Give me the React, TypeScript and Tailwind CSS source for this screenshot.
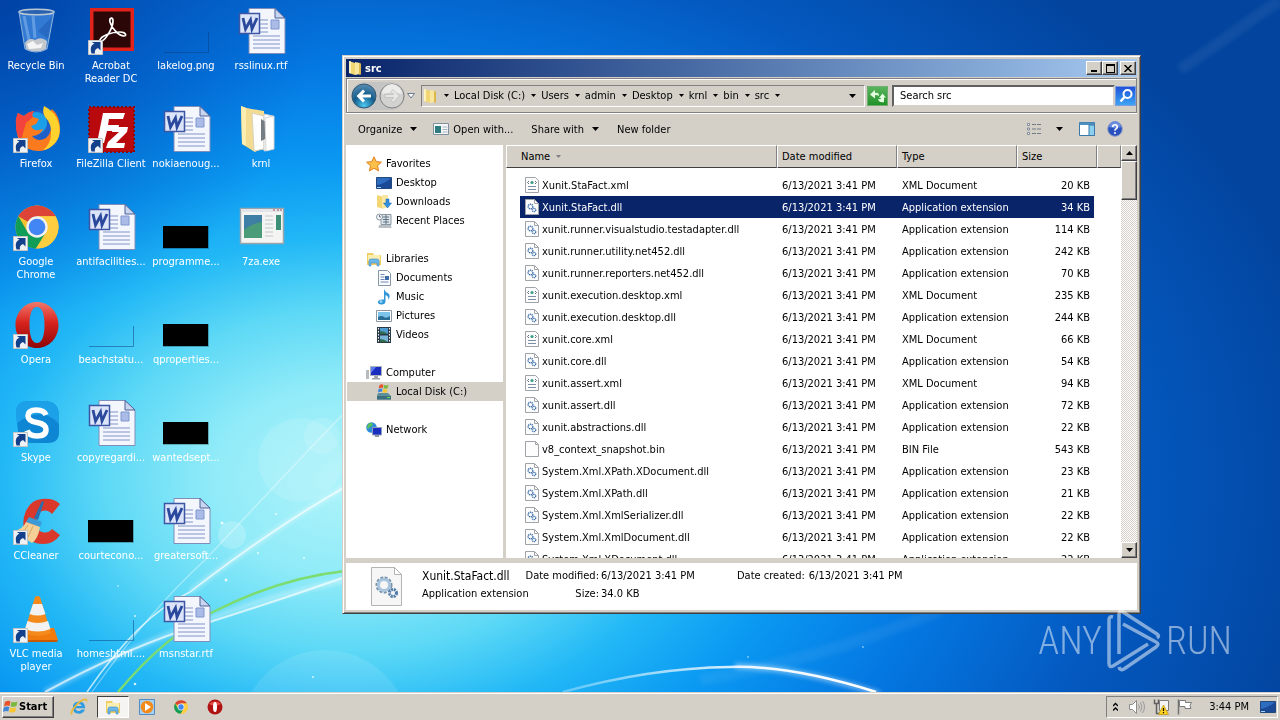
import { FC, JSX, ReactNode } from "react";

const raised =
  "border border-t-white border-l-white border-r-[#404040] border-b-[#404040] bg-[#d4d0c8] shadow-[inset_-1px_-1px_0_#808080]";
const sunken = "border border-t-[#808080] border-l-[#808080] border-r-white border-b-white";

const Wallpaper: FC = () => (
  <svg
    className="absolute inset-0 h-full w-full"
    viewBox="0 0 1280 720"
    preserveAspectRatio="xMidYMid slice"
    aria-hidden="true"
  >
    <defs>
      <radialGradient id="sky" gradientUnits="userSpaceOnUse" cx="0" cy="0" r="1" gradientTransform="translate(350 480) scale(992 690)">
        <stop offset="0" stopColor="#b0f4fb" />
        <stop offset="0.14" stopColor="#90ebf8" />
        <stop offset="0.25" stopColor="#5cd8f6" />
        <stop offset="0.35" stopColor="#22b8f6" />
        <stop offset="0.46" stopColor="#0a98f2" />
        <stop offset="0.6" stopColor="#0478e2" />
        <stop offset="0.78" stopColor="#0459c0" />
        <stop offset="1" stopColor="#02449e" />
      </radialGradient>
      <linearGradient id="arc" x1="0" x2="1" y1="0" y2="0">
        <stop offset="0" stopColor="#fff" stopOpacity="0.3" />
        <stop offset="0.6" stopColor="#fff" stopOpacity="0.9" />
        <stop offset="1" stopColor="#fff" />
      </linearGradient>
      <radialGradient id="corner" gradientUnits="userSpaceOnUse" cx="0" cy="0" r="320">
        <stop offset="0" stopColor="#003c9e" stopOpacity="0.8" />
        <stop offset="1" stopColor="#0050b8" stopOpacity="0" />
      </radialGradient>
      <filter id="soft" x="-20%" y="-20%" width="140%" height="140%">
        <feGaussianBlur stdDeviation="2" />
      </filter>
    </defs>
    <rect width="1280" height="720" fill="url(#sky)" />
    <rect width="320" height="320" fill="url(#corner)" />
    <circle cx="300" cy="460" r="42" fill="#fff" opacity="0.12" />
    <circle cx="322" cy="436" r="18" fill="#fff" opacity="0.12" />
    <circle cx="232" cy="535" r="14" fill="#fff" opacity="0.2" />
    <circle cx="325" cy="735" r="85" fill="#fff" opacity="0.1" />
    <g fill="none" stroke="#fff" filter="url(#soft)">
      <path d="M45 692Q200 610 345 580" strokeWidth="5" opacity="0.35" />
      <path d="M190 592Q270 530 345 487" strokeWidth="5" opacity="0.35" />
      <path d="M735 666Q800 668 880 694" strokeWidth="6" opacity="0.4" />
      <path d="M1280 0L1180 70M700 680Q820 660 940 610" strokeWidth="12" opacity="0.06" />
    </g>
    <g fill="none" stroke="#fff">
      <path d="M45 692Q130 646 200 625Q280 600 345 577" strokeWidth="2" opacity="0.65" />
      <path d="M87 692Q140 615 190 592Q270 530 345 487" strokeWidth="1.5" opacity="0.7" />
      <path d="M92 692Q150 610 205 560Q280 480 345 412" strokeWidth="1.2" opacity="0.4" />
    </g>
    <path d="M118 692Q165 636 213 612Q280 578 345 571" fill="none" stroke="#7cdc70" strokeWidth="2.5" />
    <path d="M563 692Q650 668 730 667Q790 665 876 692" fill="none" stroke="url(#arc)" strokeWidth="2.5" />
    <g fill="#fff" opacity="0.8">
      <circle cx="222" cy="523" r="1.5" />
      <circle cx="276" cy="514" r="1" />
      <circle cx="226" cy="580" r="1.5" />
      <circle cx="258" cy="553" r="1" />
      <circle cx="304" cy="558" r="1" />
      <circle cx="135" cy="616" r="1" />
      <circle cx="135" cy="684" r="1.3" />
      <circle cx="313" cy="677" r="1" />
      <circle cx="118" cy="586" r="0.8" />
      <circle cx="748" cy="657" r="0.8" />
      <circle cx="863" cy="647" r="0.8" />
    </g>
  </svg>
);

/* ---------- desktop icons, all drawn on a 48px board ---------- */

const Board: FC<{ children: ReactNode; link?: boolean }> = ({ children, link }) => (
  <svg className="h-12 w-12 shrink-0 overflow-visible" viewBox="0 0 48 48" aria-hidden="true">
    {children}
    {link && (
      <g>
        <path d="M1.5 33.5h14v14h-14z" fill="#eef1f6" stroke="#c4c4c4" />
        <path d="M4.500 46.500C3 41 4 38 7.500 36.800L4.800 35H13.500v8.500l-2.500-2.500C8 42 7.500 44 8 46.500z" fill="#12408a" />
      </g>
    )}
  </svg>
);

const RecycleBin: FC = () => (
  <Board>
    <path d="M7 4l6 38q11 6 22 0l7-38z" fill="#3f86dc" opacity="0.8" />
    <path d="M12 9l5 24 M21 9l2 22" stroke="#8fc0f2" strokeWidth="3" opacity="0.5" fill="none" />
    <path d="M40 10L26 24l10 8z" fill="#1e5cb0" opacity="0.5" />
    <path d="M13 36q4-6 10-3 6-4 12 1l-1 8q-10 5-20 0z" fill="#c4c8cc" />
    <path d="M15 37l6-3 4 4 6-2-2 5-12 1z" fill="#f4f4f4" />
    <ellipse cx="24.500" cy="5" rx="17.500" ry="2.800" fill="#2a62b0" stroke="#b8c8d4" strokeWidth="1.600" />
    <path d="M7 5l6 37q11 6 22 0l7-37" fill="none" stroke="#8fb4dc" />
  </Board>
);

const Acrobat: FC = () => (
  <Board link>
    <path d="M3 1h44v43H3z" fill="#e2231a" />
    <path d="M6.500 4.500h37v36h-37z" fill="#2b0707" />
    <path
      d="M13 33c1-4 11-8 20-8 6 0 7 4 4 4-5 0-12-7-14-14-1-4 3-6 3-1 0 7-7 18-11 20-2 1-3 0-2-1z"
      fill="none"
      stroke="#fff"
      strokeWidth="1.700"
    />
  </Board>
);

const Firefox: FC = () => (
  <Board link>
    <circle cx="26" cy="22" r="17" fill="#1f5fc8" />
    <circle cx="24" cy="18" r="11" fill="#1b9fe8" />
    <path d="M6 8q3 2 6 3 4-4 10-5-3 4-1 6l6 2-3 5-5 2q2 5 8 4l4-1q-3 7-11 7Q26 38 34 33q7-6 4-16-3-8 2-13 8 7 8 20 0 10-7 16-6 6-15 6-10 0-16-7-6-7-5-16Q3 14 6 8z" fill="#fb7a1e" />
    <path d="M6 8q3 2 6 3 4-4 10-5-3 4-1 6l-7 6-5 17q-6-7-5-15Q3 14 6 8z" fill="#f2443c" />
    <path d="M32 1q12 6 15 18 3 14-7 22-5 4-9 4 8-6 8-16 1-10-6-17-3-5-1-11z" fill="#ffd22e" />
  </Board>
);

const FileZilla: FC = () => (
  <Board link>
    <path d="M2 2h45v45H2z" fill="#b8090c" />
    <path d="M2 2h45v45H2z" fill="none" stroke="#8a0a0c" strokeWidth="2" strokeDasharray="2 2" />
    <path d="M16 8h22l-2 6H22l-1 6h11l-1 6H20l-3 12h-7z" fill="#fff" />
    <path d="M26 22h15l-1 5-11 11h9l-1 5H19l2-6 11-10h-7z" fill="#fff" />
  </Board>
);

const ChromeShape: FC = () => (
  <g>
    <circle cx="25" cy="24" r="21.500" fill="#f1c232" />
    <path d="M25 24L6.400 13.300A21.500 21.500 0 0 1 43.600 13.300H25z" fill="#db4437" />
    <path d="M6.400 13.300A21.500 21.500 0 0 0 24 45.500L34 29 15.500 29z" fill="#0f9d58" />
    <path d="M25 13.300h18.600A21.500 21.500 0 0 1 24 45.500L34.300 29.400z" fill="#ffcd40" />
    <circle cx="25" cy="24" r="10.700" fill="#f1f1f1" />
    <circle cx="25" cy="24" r="8.300" fill="#4285f4" />
  </g>
);

const OperaShape: FC = () => (
  <g>
    <linearGradient id="operaRed" x1="0" x2="0" y1="0" y2="1">
      <stop offset="0" stopColor="#f0786c" />
      <stop offset="0.45" stopColor="#d8231d" />
      <stop offset="1" stopColor="#8e0505" />
    </linearGradient>
    <path
      fillRule="evenodd"
      d="M25 1c12 0 21.500 10 21.500 23S37 47 25 47 3.500 37 3.500 24 13 1 25 1zm0 5c-5.500 0-7.500 8-7.500 18S19.500 42 25 42s7.500-8 7.500-18S30.500 6 25 6z"
      fill="url(#operaRed)"
    />
  </g>
);

const Skype: FC = () => (
  <Board link>
    <path d="M4 14Q4 2 16 2h16q15 0 15 15v16q0 11-11 11H18Q6 44 6 32z" fill="#0f86d4" />
    <path d="M4 14Q4 2 16 2h16q15 0 15 15v8Q30 6 5 24z" fill="#1fa8ec" opacity="0.8" />
    <path d="M34 16q-2-5-9.500-5-8.500 0-8.500 6 0 5 9 6.500 9 1.500 9 7 0 6.500-9 6.500-8 0-10-5.500" fill="none" stroke="#fff" strokeWidth="5.500" />
  </Board>
);

const CCleaner: FC = () => (
  <Board link>
    <path d="M48 7l-8 10q-4-5-10-3-6 3-6 11t6 10q6 2 10-3l8 6q-6 9-17 9-12 0-17-9-4-8-2-18Q16 3 30 2q12-1 18 5z" fill="#d9382a" />
    <path d="M30 4l2 1-6 18-4-2z" fill="#2a6fb0" />
    <path d="M17 20l13 5-2 5-14-5z" fill="#3c9bd6" />
    <path d="M14 25l14 5q-2 12-8 16L2 34q9-2 12-9z" fill="#f4cf96" />
    <path d="M16 28l-6 9M21 29l-5 11" stroke="#d8a860" />
  </Board>
);

const Vlc: FC = () => (
  <Board link>
    <path d="M9 33h33l4 12H7z" fill="#f07a0c" />
    <path d="M7 45h39l-1 2H8z" fill="#c85a04" />
    <path d="M23 2q2.500-2 5 0l11 36q-13 6-27 0z" fill="#f58a1c" />
    <path d="M21 9h9l3.500 10q-7.500 3-16 0zM15.500 26q10 4 20.500 0l2.500 8q-13 5-25.500 0z" fill="#f2f2f2" />
  </Board>
);

const WordDoc: FC = () => (
  <Board>
    <path d="M12 1.500h26l10 9.500v35.500H12z" fill="#f3f6fd" stroke="#7f8fba" />
    <path d="M38 1.500V11h10z" fill="#c9d6ef" stroke="#4a5f96" />
    <path d="M22 13h9M22 17h9M22 21h9M22 25h9M16 29h27M16 33h27M16 37h27M16 41h27" stroke="#8293c8" />
    <path d="M34 13h8v9h-8z" fill="#a9bbe6" stroke="#7f96cf" />
    <path d="M2.500 6.500h20v20h-20z" fill="#dbe4f8" stroke="#3c56a5" strokeWidth="1.500" />
    <path d="M6 11l2.500 11 5-9 1.500 9 5-11" fill="none" stroke="#2a489c" strokeWidth="2.800" />
  </Board>
);

const BlackThumb: FC = () => (
  <Board>
    <path d="M1 23h46v23H1z" fill="#000" opacity="0.25" />
    <path d="M1 23h45v22H1z" fill="#000" />
  </Board>
);

const ClearThumb: FC = () => (
  <Board>
    <path d="M2 45.500h44.500V25" fill="none" stroke="#0a3f80" strokeOpacity="0.5" />
  </Board>
);

const FolderOpen: FC = () => (
  <Board>
    <path d="M4 1l14 5v41L5 39z" fill="#ecc968" />
    <path d="M4 1l5 2v38l-4-2z" fill="#fbeeb0" />
    <path d="M9 3l18 3v36l-9 5-9-6z" fill="#f3dc92" />
    <path d="M15 8l12 3v33l-10 2z" fill="#fdfdfd" stroke="#d8d0b8" />
    <path d="M27 9l9 2v33l-9 2z" fill="#fff" stroke="#cfcfcf" />
    <path d="M24 14l5 3-1 10 2 6-6 3z" fill="#747c84" />
    <path d="M28 13l9-2v33l-8 2z" fill="#fff" stroke="#d4d4d4" />
  </Board>
);

const ExeWindow: FC = () => (
  <Board>
    <path d="M3.500 5.500h43v35h-43z" fill="#f4f4f2" stroke="#9aa4ac" strokeWidth="1.500" />
    <path d="M4 6h42v3H4z" fill="#e1e4e8" />
    <path d="M36 7h2M40 7h2M43 7h2" stroke="#a05050" />
    <path d="M7 12h18v23H7z" fill="#4a9c78" />
    <path d="M7 12h18v7q-10 1-18 8z" fill="#3f7ea4" />
    <path d="M28 13h8M28 17h8M28 21h8M28 25h8M28 29h8M28 33h8" stroke="#c2c6ca" />
    <path d="M39 12h5v15h-5z" fill="#3d8f78" />
  </Board>
);

const ChromeIcon: FC = () => <Board link><ChromeShape /></Board>;
const OperaIcon: FC = () => <Board link><OperaShape /></Board>;

type Shortcut = { label: string; icon: FC };

const desktop: (Shortcut | null)[] = [
  { label: "Recycle Bin", icon: RecycleBin },
  { label: "Acrobat\nReader DC", icon: Acrobat },
  { label: "lakelog.png", icon: ClearThumb },
  { label: "rsslinux.rtf", icon: WordDoc },
  { label: "Firefox", icon: Firefox },
  { label: "FileZilla Client", icon: FileZilla },
  { label: "nokiaenoug...", icon: WordDoc },
  { label: "krnl", icon: FolderOpen },
  { label: "Google\nChrome", icon: ChromeIcon },
  { label: "antifacilities...", icon: WordDoc },
  { label: "programme...", icon: BlackThumb },
  { label: "7za.exe", icon: ExeWindow },
  { label: "Opera", icon: OperaIcon },
  { label: "beachstatu...", icon: ClearThumb },
  { label: "qproperties...", icon: BlackThumb },
  null,
  { label: "Skype", icon: Skype },
  { label: "copyregardi...", icon: WordDoc },
  { label: "wantedsept...", icon: BlackThumb },
  null,
  { label: "CCleaner", icon: CCleaner },
  { label: "courtecono...", icon: BlackThumb },
  { label: "greatersoft...", icon: WordDoc },
  null,
  { label: "VLC media\nplayer", icon: Vlc },
  { label: "homeshtml....", icon: ClearThumb },
  { label: "msnstar.rtf", icon: WordDoc },
  null,
];

/* ---------- 16px icons ---------- */

const Small: FC<{ children: ReactNode; className?: string }> = ({ children, className = "h-4 w-4" }) => (
  <svg className={`shrink-0 ${className}`} viewBox="0 0 16 16" aria-hidden="true">
    {children}
  </svg>
);

const Caret: FC<{ big?: boolean; up?: boolean; gray?: boolean }> = ({ big, up, gray }) => (
  <svg className={big ? "h-1 w-[7px] shrink-0" : "h-[3px] w-[5px] shrink-0"} viewBox="0 0 7 4" aria-hidden="true">
    <path d={up ? "M0 4h7L3.500 0z" : "M0 0h7L3.500 4z"} fill={gray ? "#808080" : "#000"} />
  </svg>
);

const FolderSmall: FC = () => (
  <Small>
    <path d="M2 1l6 2v12l-6-2z" fill="#f3d674" />
    <path d="M2 1l2 .6v12l-2-.6z" fill="#fdf3bd" />
    <path d="M8 2l5 1v11l-5 1z" fill="#f8e69c" />
    <path d="M12 3l2 .4v11l-2 .4z" fill="#dcb84c" />
  </Small>
);

const LibraryIcon: FC = () => (
  <Small>
    <path d="M1 2h6l1 2h7v10H1z" fill="#efcf62" />
    <path d="M2 4h12v6H2z" fill="#faeeb0" />
    <path d="M3 15v-5q0-2 2-2h6q2 0 2 2v5h-2v-3H5v3z" fill="#6cb8ea" stroke="#3f8cc4" strokeWidth="0.600" />
  </Small>
);

const ScreenIcon: FC = () => (
  <Small>
    <path d="M.5 2.500h15v11H.500z" fill="#2e6cc0" stroke="#23497c" />
    <path d="M1 10q7-1 14-7v10H1z" fill="#1a4a96" />
    <path d="M1 12h4v1H1z" fill="#9fd0f5" />
  </Small>
);

const DllIcon: FC = () => (
  <Small>
    <path d="M1.500.5h9l4 4v11h-13z" fill="#fcfcfc" stroke="#a0a4a8" />
    <path d="M10.500.5v4h4" fill="none" stroke="#a0a4a8" />
    <circle cx="6.500" cy="7.500" r="2.300" fill="#fff" stroke="#3d6fa8" strokeWidth="1.500" strokeDasharray="1.200 .6" />
    <circle cx="10" cy="11" r="1.700" fill="#fff" stroke="#3d6fa8" strokeWidth="1.300" strokeDasharray="1 .5" />
  </Small>
);

const XmlIcon: FC = () => (
  <Small>
    <path d="M1.500.5h10l3 3v12h-13z" fill="#fcfcfc" stroke="#a0a4a8" />
    <path d="M5 4L3.500 5.500 5 7M11 4l1.500 1.500L11 7" fill="none" stroke="#60707e" />
    <circle cx="8" cy="5.500" r="1.600" fill="#3b9c88" />
    <path d="M4 9.500h8M4 12.500h8" stroke="#7c8ea0" />
  </Small>
);

const BinIcon: FC = () => (
  <Small>
    <path d="M1.500.5h10l3 3v12h-13z" fill="#fdfdfd" stroke="#a0a4a8" />
    <path d="M11.500.5v3h3" fill="none" stroke="#a0a4a8" />
  </Small>
);

const Flag: FC = () => (
  <g>
    <path d="M2 3q3-2 5.500-.5L6.500 7Q4 6 1 7.500z" fill="#e8532a" />
    <path d="M8.500 2.800Q12 4 14.500 2.500L13.500 7Q11 8.500 7.500 7.300z" fill="#7cb83c" />
    <path d="M.8 8.500q3-1.700 5.500-.5L5.300 12.500Q3 11.500 0 13z" fill="#3f86d8" />
    <path d="M7.300 8.500q3 1.300 5.900-.2l-1 4.500q-3 1.500-6 .2z" fill="#f8c631" />
  </g>
);

type Place = { label: string; icon: ReactNode; active?: boolean };

const places: { head: Place; items: Place[] }[] = [
  {
    head: {
      label: "Favorites",
      icon: (
        <Small>
          <path d="M8 .8l2.200 4.800 5.200.6-3.900 3.500 1.100 5.200L8 12.300l-4.600 2.600 1.100-5.200L.6 6.200l5.200-.6z" fill="#fdc04a" stroke="#e0801c" />
        </Small>
      ),
    },
    items: [
      { label: "Desktop", icon: <ScreenIcon /> },
      {
        label: "Downloads",
        icon: (
          <Small>
            <path d="M1 1l5 1.500v12L1 13z" fill="#f3d674" />
            <path d="M6 1h6v12l-6 2z" fill="#f9e8a2" />
            <path d="M10 5h3v4h2.500L11.500 14 7.500 9H10z" fill="#2f8fe0" stroke="#1b60a8" strokeWidth="0.500" />
          </Small>
        ),
      },
      {
        label: "Recent Places",
        icon: (
          <Small>
            <path d="M5 1.500h10v10H5z" fill="#dfe6ec" stroke="#8a98a4" />
            <path d="M7 4h6M7 6.500h6M7 9h6M10 2v9" stroke="#5f7486" />
            <path d="M3 12h12l.5 3h-13z" fill="#b8c0c6" />
            <circle cx="3.500" cy="4" r="3" fill="#f5f8fa" stroke="#8a98a4" />
            <path d="M3.500 2v2h1.500" fill="none" stroke="#445" strokeWidth="0.700" />
          </Small>
        ),
      },
    ],
  },
  {
    head: { label: "Libraries", icon: <LibraryIcon /> },
    items: [
      {
        label: "Documents",
        icon: (
          <Small>
            <path d="M2.500.5h9l3 3v12h-12z" fill="#fafcfe" stroke="#8796a4" />
            <path d="M4.500 4.500h4M4.500 7h4M4.500 9.500h4M4.500 12h8" stroke="#6f8ab4" />
            <path d="M9 6h4v4H9z" fill="#3f6aa8" />
          </Small>
        ),
      },
      {
        label: "Music",
        icon: (
          <Small>
            <path d="M8 0q1 3 4.500 4.500Q15 7 12 11q1-4-2.500-5v6q0 3.500-4 3.500-4 0-3.500-3Q3 10 8 10.500z" fill="#2f96d8" />
            <circle cx="5" cy="12.500" r="1.500" fill="#8fd0f5" />
          </Small>
        ),
      },
      {
        label: "Pictures",
        icon: (
          <Small>
            <path d="M.5 2.500h15v11H.500z" fill="#fff" stroke="#8c98a4" />
            <path d="M2 4h12v8H2z" fill="#7cc4e8" />
            <path d="M2 9q4-2 6 0t6-1v4H2z" fill="#2a6c94" />
          </Small>
        ),
      },
      {
        label: "Videos",
        icon: (
          <Small>
            <path d="M1 0h14v16H1z" fill="#2c3a48" />
            <path d="M4 1h8v6H4z" fill="#4c9cd0" />
            <path d="M4 8.500h8V15H4z" fill="#78b4d8" />
            <path d="M4 4q4 0 8 3H4zM4 12q4 0 8 3H4z" fill="#2f6c50" />
            <path d="M2.500 1v14M13.500 1v14" stroke="#fff" strokeDasharray="1.500 1.500" />
          </Small>
        ),
      },
    ],
  },
  {
    head: {
      label: "Computer",
      icon: (
        <Small>
          <path d="M0 5h3v9H0z" fill="#b8bcc0" />
          <path d="M4.500 1.500h11v9h-11z" fill="#1a2fc0" stroke="#a8b0b8" />
          <path d="M5 2h5L5 8z" fill="#5c7cf0" />
          <path d="M8 11h4v2h2v1.500H6V13h2z" fill="#a0a6ac" />
        </Small>
      ),
    },
    items: [
      {
        label: "Local Disk (C:)",
        active: true,
        icon: (
          <Small>
            <g transform="translate(2 -1) scale(.72)"><Flag /></g>
            <path d="M2 9h10l3 3v3.500H1V12z" fill="#5f9098" />
            <path d="M1 12h14v3.500H1z" fill="#3b6f80" />
            <path d="M11 13.500h3" stroke="#64e05c" />
          </Small>
        ),
      },
    ],
  },
  {
    head: {
      label: "Network",
      icon: (
        <Small>
          <circle cx="5.500" cy="5.500" r="5.300" fill="#2f8cd8" />
          <path d="M2 2q3-2 5 0-1 3-3 3-2 3-3 1zM6 6q3-1 4 1-2 3-4 3z" fill="#5cc05a" />
          <path d="M6.500 5.500h9v7.500h-9z" fill="#1a2fc0" stroke="#8fa0c0" />
          <path d="M9 13h4v2H9z" fill="#8c949c" />
        </Small>
      ),
    },
    items: [],
  },
];

const files: [string, string, number][] = [
  ["Xunit.StaFact.xml", "xml", 20],
  ["Xunit.StaFact.dll", "dll", 34],
  ["xunit.runner.visualstudio.testadapter.dll", "dll", 114],
  ["xunit.runner.utility.net452.dll", "dll", 242],
  ["xunit.runner.reporters.net452.dll", "dll", 70],
  ["xunit.execution.desktop.xml", "xml", 235],
  ["xunit.execution.desktop.dll", "dll", 244],
  ["xunit.core.xml", "xml", 66],
  ["xunit.core.dll", "dll", 54],
  ["xunit.assert.xml", "xml", 94],
  ["xunit.assert.dll", "dll", 72],
  ["xunit.abstractions.dll", "dll", 22],
  ["v8_context_snapshot.bin", "bin", 543],
  ["System.Xml.XPath.XDocument.dll", "dll", 23],
  ["System.Xml.XPath.dll", "dll", 21],
  ["System.Xml.XmlSerializer.dll", "dll", 22],
  ["System.Xml.XmlDocument.dll", "dll", 22],
  ["System.Xml.XDocument.dll", "dll", 22],
];

const kinds: Record<string, { type: string; icon: FC }> = {
  xml: { type: "XML Document", icon: XmlIcon },
  dll: { type: "Application extension", icon: DllIcon },
  bin: { type: "BIN File", icon: BinIcon },
};

const crumbs = ["Local Disk (C:)", "Users", "admin", "Desktop", "krnl", "bin", "src"];

const TitleBar: FC = () => (
  <header className="flex h-[18px] items-center bg-linear-to-r from-[#0a246a] to-[#a6caf0] pr-px pl-px text-white">
    <FolderSmall />
    <h1 className="ml-0.5 flex-1 font-bold">src</h1>
    <button aria-label="Minimize" className={`flex h-3.5 w-4 items-end justify-center pb-px ${raised}`}>
      <span className="mb-px h-0.5 w-1.5 bg-black" />
    </button>
    <button aria-label="Maximize" className={`flex h-3.5 w-4 items-center justify-center ${raised}`}>
      <span className="h-[9px] w-[9px] border border-t-2 border-black" />
    </button>
    <button aria-label="Close" className={`ml-0.5 flex h-3.5 w-4 items-center justify-center ${raised}`}>
      <svg className="h-[7px] w-2" viewBox="0 0 8 7" aria-hidden="true">
        <path d="M.5 0l7 7M7.500 0l-7 7" stroke="#000" strokeWidth="1.500" />
      </svg>
    </button>
  </header>
);

const AddressBar: FC = () => (
  <div className="mt-px flex h-[35px] items-center border border-[#808080] shadow-[inset_1px_1px_0_#fff,0_1px_0_#fff]">
    <div className="ml-1 flex h-7 items-center rounded-full bg-[#c4c4c4]">
      <button aria-label="Back">
        <svg className="block h-[26px] w-[26px]" viewBox="0 0 26 26" aria-hidden="true">
          <radialGradient id="back" cx="0.500" cy="0.900" r="0.900">
            <stop offset="0" stopColor="#4cc8f0" />
            <stop offset="0.500" stopColor="#145c8c" />
            <stop offset="1" stopColor="#5a8fb4" />
          </radialGradient>
          <circle cx="13" cy="13" r="12" fill="url(#back)" stroke="#33566e" />
          <path d="M5.500 13L12 6.500l2 2L11.500 11.500H20v3h-8.500l2.500 3-2 2z" fill="#fff" />
        </svg>
      </button>
      <button aria-label="Forward" className="ml-0.5">
        <svg className="block h-[26px] w-[26px]" viewBox="0 0 26 26" aria-hidden="true">
          <circle cx="13" cy="13" r="12" fill="#d2d2d0" stroke="#808080" />
          <path d="M3 11a10 10 0 0 1 20 0q-10-3-20 0z" fill="#ececea" />
          <path d="M20.500 13L14 6.500l-2 2 2.500 3H6v3h8.500l-2.500 3 2 2z" fill="#e6e6e4" stroke="#b8b8b6" strokeWidth="0.700" />
        </svg>
      </button>
    </div>
    <button aria-label="Recent pages" className="mx-0.5">
      <svg className="h-1.5 w-2" viewBox="0 0 8 6" aria-hidden="true">
        <path d="M.5.5h7L4 5z" fill="#fff" stroke="#6c7c8c" />
      </svg>
    </button>
    <nav aria-label="Address" className={`ml-1 flex h-[22px] min-w-0 flex-1 items-center ${sunken}`}>
      <FolderSmall />
      <ol className="ml-1.5 flex items-center whitespace-nowrap">
        {crumbs.map((crumb) => (
          <li key={crumb} className="flex items-center">
            <Caret />
            <a href="#" className="mr-1.5 ml-[5px]">{crumb}</a>
          </li>
        ))}
        <li><Caret /></li>
      </ol>
      <button aria-label="Previous locations" className="mr-2 ml-auto">
        <Caret big />
      </button>
    </nav>
    <button aria-label="Refresh" className="ml-0.5 h-5 w-[21px] border border-[#6fae70] bg-linear-to-b from-[#58b45c] to-[#1f9228]">
      <svg className="mx-auto h-4 w-4" viewBox="0 0 16 16" aria-hidden="true">
        <path d="M0 6.500L5 2v3q4-1 4 3-1-1-4-1v3.500zM16 9.500L12.500 5.500 9 10h2q0 2-3 1 1 4 6 3v-4.500z" fill="#e4ffe0" />
      </svg>
    </button>
    <input
      type="text"
      aria-label="Search src"
      placeholder="Search src"
      className="ml-1 h-[22px] w-[223px] border-2 border-t-[#606060] border-r-[#d4d0c8] border-b-[#d4d0c8] border-l-[#606060] bg-white pl-1.5 placeholder:text-black"
    />
    <button aria-label="Search" className="h-5 w-[21px] border border-[#7a9ce0] bg-linear-to-b from-[#2450d8] to-[#3fa4f4]">
      <svg className="mx-auto h-4 w-4" viewBox="0 0 16 16" aria-hidden="true">
        <circle cx="9.500" cy="6" r="4" fill="none" stroke="#fff" strokeWidth="2" />
        <path d="M6.500 9L2.500 13.500" stroke="#fff" strokeWidth="2.500" />
      </svg>
    </button>
  </div>
);

const CommandBar: FC = () => (
  <div className="flex h-8 items-center pr-3.5 pl-3">
    <button className="flex items-center">
      Organize <span className="ml-2 flex"><Caret big /></span>
    </button>
    <button className="ml-4 flex items-center gap-1">
      <Small>
        <path d="M.5 2.500h15v11H.500z" fill="#f4f6f8" stroke="#8090a0" />
        <path d="M2 5h6v7H2z" fill="#2f7c80" />
        <path d="M9.500 6h5M9.500 8.500h5M9.500 11h5" stroke="#a8b4c0" />
      </Small>
      Open with...
    </button>
    <button className="ml-[18px] flex items-center">
      Share with <span className="ml-2 flex"><Caret big /></span>
    </button>
    <button className="ml-[18px]">New folder</button>
    <button aria-label="Change view" className="ml-auto">
      <Small>
        <path d="M1.500 2.500h2v2h-2zM1.500 7h2v2h-2zM1.500 11.500h2v2h-2z" fill="#fff" stroke="#7f8a96" />
        <path d="M6 3.500h4M11 3.500h4M6 8h4M11 8h4M6 12.500h4M11 12.500h4" stroke="#6f7a86" />
      </Small>
    </button>
    <button aria-label="More view options" className="ml-3.5"><Caret big /></button>
    <button aria-label="Preview pane" className="ml-4">
      <Small>
        <path d="M.5 1.500h15v13H.500z" fill="#fff" stroke="#3a78a8" />
        <path d="M.5 1.500h15V4H.500z" fill="#4f8fc0" />
        <path d="M10 4h5.500v10.500H10z" fill="#8cd0f0" stroke="#3a78a8" />
      </Small>
    </button>
    <button aria-label="Help" className="ml-3">
      <svg className="h-4 w-4" viewBox="0 0 16 16" aria-hidden="true">
        <circle cx="8" cy="8" r="7.300" fill="#2a52be" stroke="#8c9cc4" />
        <path d="M2 6a6 6 0 0 1 12 0q-6 2-12 0z" fill="#6c8ce0" />
        <path d="M5.700 6q0-2.300 2.300-2.300T10.300 6q0 1.200-1.200 1.800T8 9.800" fill="none" stroke="#fff" strokeWidth="1.600" />
        <circle cx="8" cy="12" r="1" fill="#fff" />
      </svg>
    </button>
  </div>
);

const PlaceRow: FC<{ place: Place; child?: boolean }> = ({ place, child }) => (
  <a
    href="#"
    className={`flex h-[19px] items-center gap-1 ${child ? "pl-[29px]" : "pl-[19px]"} ${place.active ? "bg-[#d4d0c8]" : ""}`}
  >
    {place.icon}
    <span>{place.label}</span>
  </a>
);

const Sidebar: FC = () => (
  <nav aria-label="Places" className="flex w-[157px] shrink-0 flex-col gap-[19px] bg-white pt-[9px] pl-px">
    {places.map(({ head, items }) => (
      <ul key={head.label}>
        <li><PlaceRow place={head} /></li>
        {items.map((item) => (
          <li key={item.label}><PlaceRow place={item} child /></li>
        ))}
      </ul>
    ))}
  </nav>
);

const th =
  "h-[23px] border border-t-white border-l-white border-r-[#808080] border-b-[#404040] bg-[#d4d0c8] pl-1 text-left font-normal";

const FileList: FC = () => (
  <div className="min-w-0 flex-1 overflow-hidden bg-white">
    <table className="w-full table-fixed border-separate border-spacing-0 whitespace-nowrap">
      <colgroup>
        <col />
        <col className="w-[120px]" />
        <col className="w-[120px]" />
        <col className="w-20" />
        <col className="w-6" />
      </colgroup>
      <thead>
        <tr>
          <th className={`${th} pl-3.5`}>
            <span className="flex items-center gap-1.5">Name <Caret gray /></span>
          </th>
          <th className={th}>Date modified</th>
          <th className={th}>Type</th>
          <th className={th}>Size</th>
          <th className={th} aria-label="More columns" />
        </tr>
      </thead>
      <tbody>
        <tr aria-hidden="true"><td className="h-1.5" /></tr>
        {files.map(([name, kind, size], index) => {
          const { type, icon: Icon } = kinds[kind];
          const cell = `flex h-[22px] items-center ${index === 1 ? "bg-[#0a246a] text-white" : ""}`;
          return (
            <tr key={name}>
              <td className="p-0 pl-3.5">
                <div className={`${cell} gap-0.5 pl-1`}><Icon />{name}</div>
              </td>
              <td className="p-0"><div className={`${cell} pl-[5px]`}>6/13/2021 3:41 PM</div></td>
              <td className="p-0"><div className={`${cell} pl-[5px]`}>{type}</div></td>
              <td className="p-0 pr-[3px]"><div className={`${cell} justify-end pr-1`}>{size} KB</div></td>
              <td />
            </tr>
          );
        })}
      </tbody>
    </table>
  </div>
);

const ScrollBar: FC = () => (
  <div className="flex w-4 shrink-0 flex-col bg-[repeating-conic-gradient(#fff_0_25%,#d4d0c8_0_50%)] bg-[length:2px_2px]">
    <button aria-label="Scroll up" className={`flex h-4 items-center justify-center ${raised}`}><Caret big up /></button>
    <div className={`h-[39px] ${raised}`} />
    <button aria-label="Scroll down" className={`mt-auto flex h-4 items-center justify-center ${raised}`}><Caret big /></button>
  </div>
);

const Details: FC = () => (
  <footer className="flex h-[47px] shrink-0 bg-white pt-1 pl-[25px] whitespace-nowrap">
    <svg className="h-10 w-8 shrink-0" viewBox="0 0 32 40" aria-hidden="true">
      <path d="M.5.5h23l7 7v31H.500z" fill="#f6f6f6" stroke="#b4b4b4" />
      <path d="M23.500.5v7h7z" fill="#fff" stroke="#b4b4b4" />
      <circle cx="13" cy="18" r="6.500" fill="#e8f0f8" stroke="#7894ac" strokeWidth="4" strokeDasharray="2.600 1.200" />
      <circle cx="13" cy="18" r="5.500" fill="#f6f6f6" stroke="#a9c4dc" strokeWidth="3" />
      <circle cx="22" cy="26" r="3.500" fill="#f6f6f6" stroke="#4f7ca8" strokeWidth="3" strokeDasharray="2 .8" />
    </svg>
    <div className="ml-[19px] w-[103px] leading-[18px]">
      <p className="text-xs leading-[18px]">Xunit.StaFact.dll</p>
      <p>Application extension</p>
    </div>
    <dl className="grid w-[212px] grid-cols-[74px_1fr] content-start gap-x-0.5 leading-[18px]">
      <dt className="text-right">Date modified:</dt>
      <dd>6/13/2021 3:41 PM</dd>
      <dt className="text-right">Size:</dt>
      <dd>34.0 KB</dd>
    </dl>
    <dl className="flex gap-1 leading-[18px]">
      <dt>Date created:</dt>
      <dd>6/13/2021 3:41 PM</dd>
    </dl>
  </footer>
);

const Explorer: FC = () => (
  <section
    aria-label="src"
    className="absolute top-[55px] right-[139px] bottom-[78px] left-[342px] flex flex-col border border-t-[#d4d0c8] border-r-[#404040] border-b-[#404040] border-l-[#d4d0c8] bg-[#d4d0c8] p-[3px] shadow-[inset_1px_1px_0_#fff,inset_-1px_-1px_0_#808080]"
  >
    <TitleBar />
    <AddressBar />
    <CommandBar />
    <div className="flex min-h-0 flex-1">
      <Sidebar />
      <div className="w-[3px] shrink-0" />
      <FileList />
      <ScrollBar />
    </div>
    <div className="h-[5px] shrink-0" />
    <Details />
  </section>
);

const Watermark: FC = () => (
  <div className="pointer-events-none absolute right-12 bottom-5 flex items-center gap-1 font-['Roboto_Condensed','Roboto',sans-serif] text-[38px] text-white/50">
    <span className="font-light">ANY</span>
    <svg className="h-[62px] w-14" viewBox="0 0 56 62" fill="none" stroke="currentColor" strokeWidth="3.500" aria-hidden="true">
      <path d="M7 7q-4-1-4 3v43q0 5 4 3l35-22M13 44V4q0-4 4-2l34 22q3 2 0 4M17 14l33 18q4 2 0 5L18 59q-4 2-5-2" />
    </svg>
    <span className="font-light">RUN</span>
  </div>
);

const quickLaunch: { label: string; icon: ReactNode; active?: boolean }[] = [
  {
    label: "Internet Explorer",
    icon: (
      <Small className="h-[18px] w-[18px]">
        <path d="M13.500 9H5q.3 2.500 3 2.500 1.500 0 2.300-1.200h3Q12 14 8 14q-5.500 0-5.500-5.500T8 3q5.500 0 5.500 6zM5 7h5.500Q10 5.300 7.800 5.300T5 7z" fill="#2f9ce0" />
        <path d="M1 15q-2-3 3-8 5-6 9-6.500 3.500 0 2 4 0-3-2.500-2.300Q8 4 4 9.500q-3 4-1.500 5z" fill="#e8b93a" />
      </Small>
    ),
  },
  { label: "Windows Explorer", icon: <LibraryIcon />, active: true },
  {
    label: "Media Player",
    icon: (
      <Small>
        <path d="M.5.5h15v15H.500z" fill="#a8d0f0" stroke="#4f8cc4" />
        <circle cx="8" cy="8" r="6.300" fill="#f28a1c" />
        <path d="M6 4l6 4-6 4z" fill="#fff" />
      </Small>
    ),
  },
  {
    label: "Chrome",
    icon: <svg className="h-3.5 w-3.5" viewBox="3 2 44 44" aria-hidden="true"><ChromeShape /></svg>,
  },
  {
    label: "Opera",
    icon: (
      <Small>
        <circle cx="8" cy="8" r="7.500" fill="#b01212" />
        <path d="M2 5a7 5 0 0 1 12 0q-6 3-12 0z" fill="#e05048" />
        <ellipse cx="8" cy="8" rx="2" ry="5" fill="#fff" />
      </Small>
    ),
  },
];

const TaskBar: FC = () => (
  <footer className="relative flex h-7 shrink-0 items-center border-t border-[#d4d0c8] bg-[#d4d0c8] px-0.5 shadow-[inset_0_1px_0_#fff]">
    <button className={`flex h-[22px] w-[52px] items-center font-bold ${raised}`}>
      <Small><Flag /></Small>
      Start
    </button>
    <div className="ml-[9px] flex items-center gap-0.5">
      {quickLaunch.map(({ label, icon, active }) => (
        <button
          key={label}
          aria-label={label}
          className={`flex h-[22px] w-8 items-center justify-center ${active ? "border border-t-[#404040] border-r-white border-b-white border-l-[#404040] bg-[#f6f4f2]" : ""}`}
        >
          {icon}
        </button>
      ))}
    </div>
    <div className={`ml-auto flex h-[22px] items-center pr-px pl-1.5 ${sunken}`}>
      <button aria-label="Show hidden icons">
        <svg className="h-2.5 w-[5px]" viewBox="0 0 5 10" fill="none" stroke="#000" strokeWidth="1.300" aria-hidden="true">
          <path d="M0 4l2.500-2.500L5 4M0 8.500L2.500 6 5 8.500" />
        </svg>
      </button>
      <span className="ml-[11px]">
        <Small>
          <path d="M.5 5.500h3l4-4v13l-4-4h-3z" fill="#fff" stroke="#8c8c8c" />
          <path d="M9.500 5.500q2 2.500 0 5M11.500 3.500q3 4.500 0 9M13.500 2q4 6 0 12" fill="none" stroke="#9a9a9a" />
        </Small>
      </span>
      <span className="ml-2">
        <Small>
          <path d="M1.500.5v4h4v-4M3.500 5v9.500H8" fill="none" stroke="#606060" strokeWidth="1.500" />
          <path d="M6.500 1.500h9v10h-9z" fill="#f4f4f4" stroke="#7c7c7c" />
          <path d="M10.500 6l5 9.500h-10z" fill="#ffd21c" stroke="#b89010" strokeWidth="0.700" />
          <path d="M10.500 9v3M10.500 13v1.300" stroke="#000" strokeWidth="1.200" />
        </Small>
      </span>
      <span className="ml-2">
        <Small>
          <path d="M1.500.5v15" stroke="#707070" strokeWidth="1.500" />
          <path d="M2.500 1.500h6v2h6l-1.500 3 1 3H8v-2H2.500z" fill="#fff" stroke="#7c7c7c" />
        </Small>
      </span>
      <time className="ml-4">3:44 PM</time>
      <button aria-label="Show desktop" className="ml-[11px]"><ScreenIcon /></button>
    </div>
  </footer>
);

const App: FC = (): JSX.Element => {
  return (
    <div className="relative flex min-h-screen w-full flex-col overflow-hidden bg-[#0455bd] font-['DejaVu_Sans_Condensed','DejaVu_Sans',sans-serif] text-[11px] leading-[13px] text-black">
      <Wallpaper />
      <main className="relative flex-1">
        <ul className="grid auto-rows-[98px] grid-cols-[repeat(4,72px)] gap-x-[3px]">
          {desktop.map((item, index) =>
            item ? (
              <li key={item.label}>
                <a href="#" className="flex flex-col items-center gap-1 pt-[7px] text-center whitespace-pre text-white">
                  <item.icon />
                  {item.label}
                </a>
              </li>
            ) : (
              <li key={index} aria-hidden="true" />
            )
          )}
        </ul>
        <Explorer />
        <Watermark />
      </main>
      <TaskBar />
    </div>
  );
};

export default App;
